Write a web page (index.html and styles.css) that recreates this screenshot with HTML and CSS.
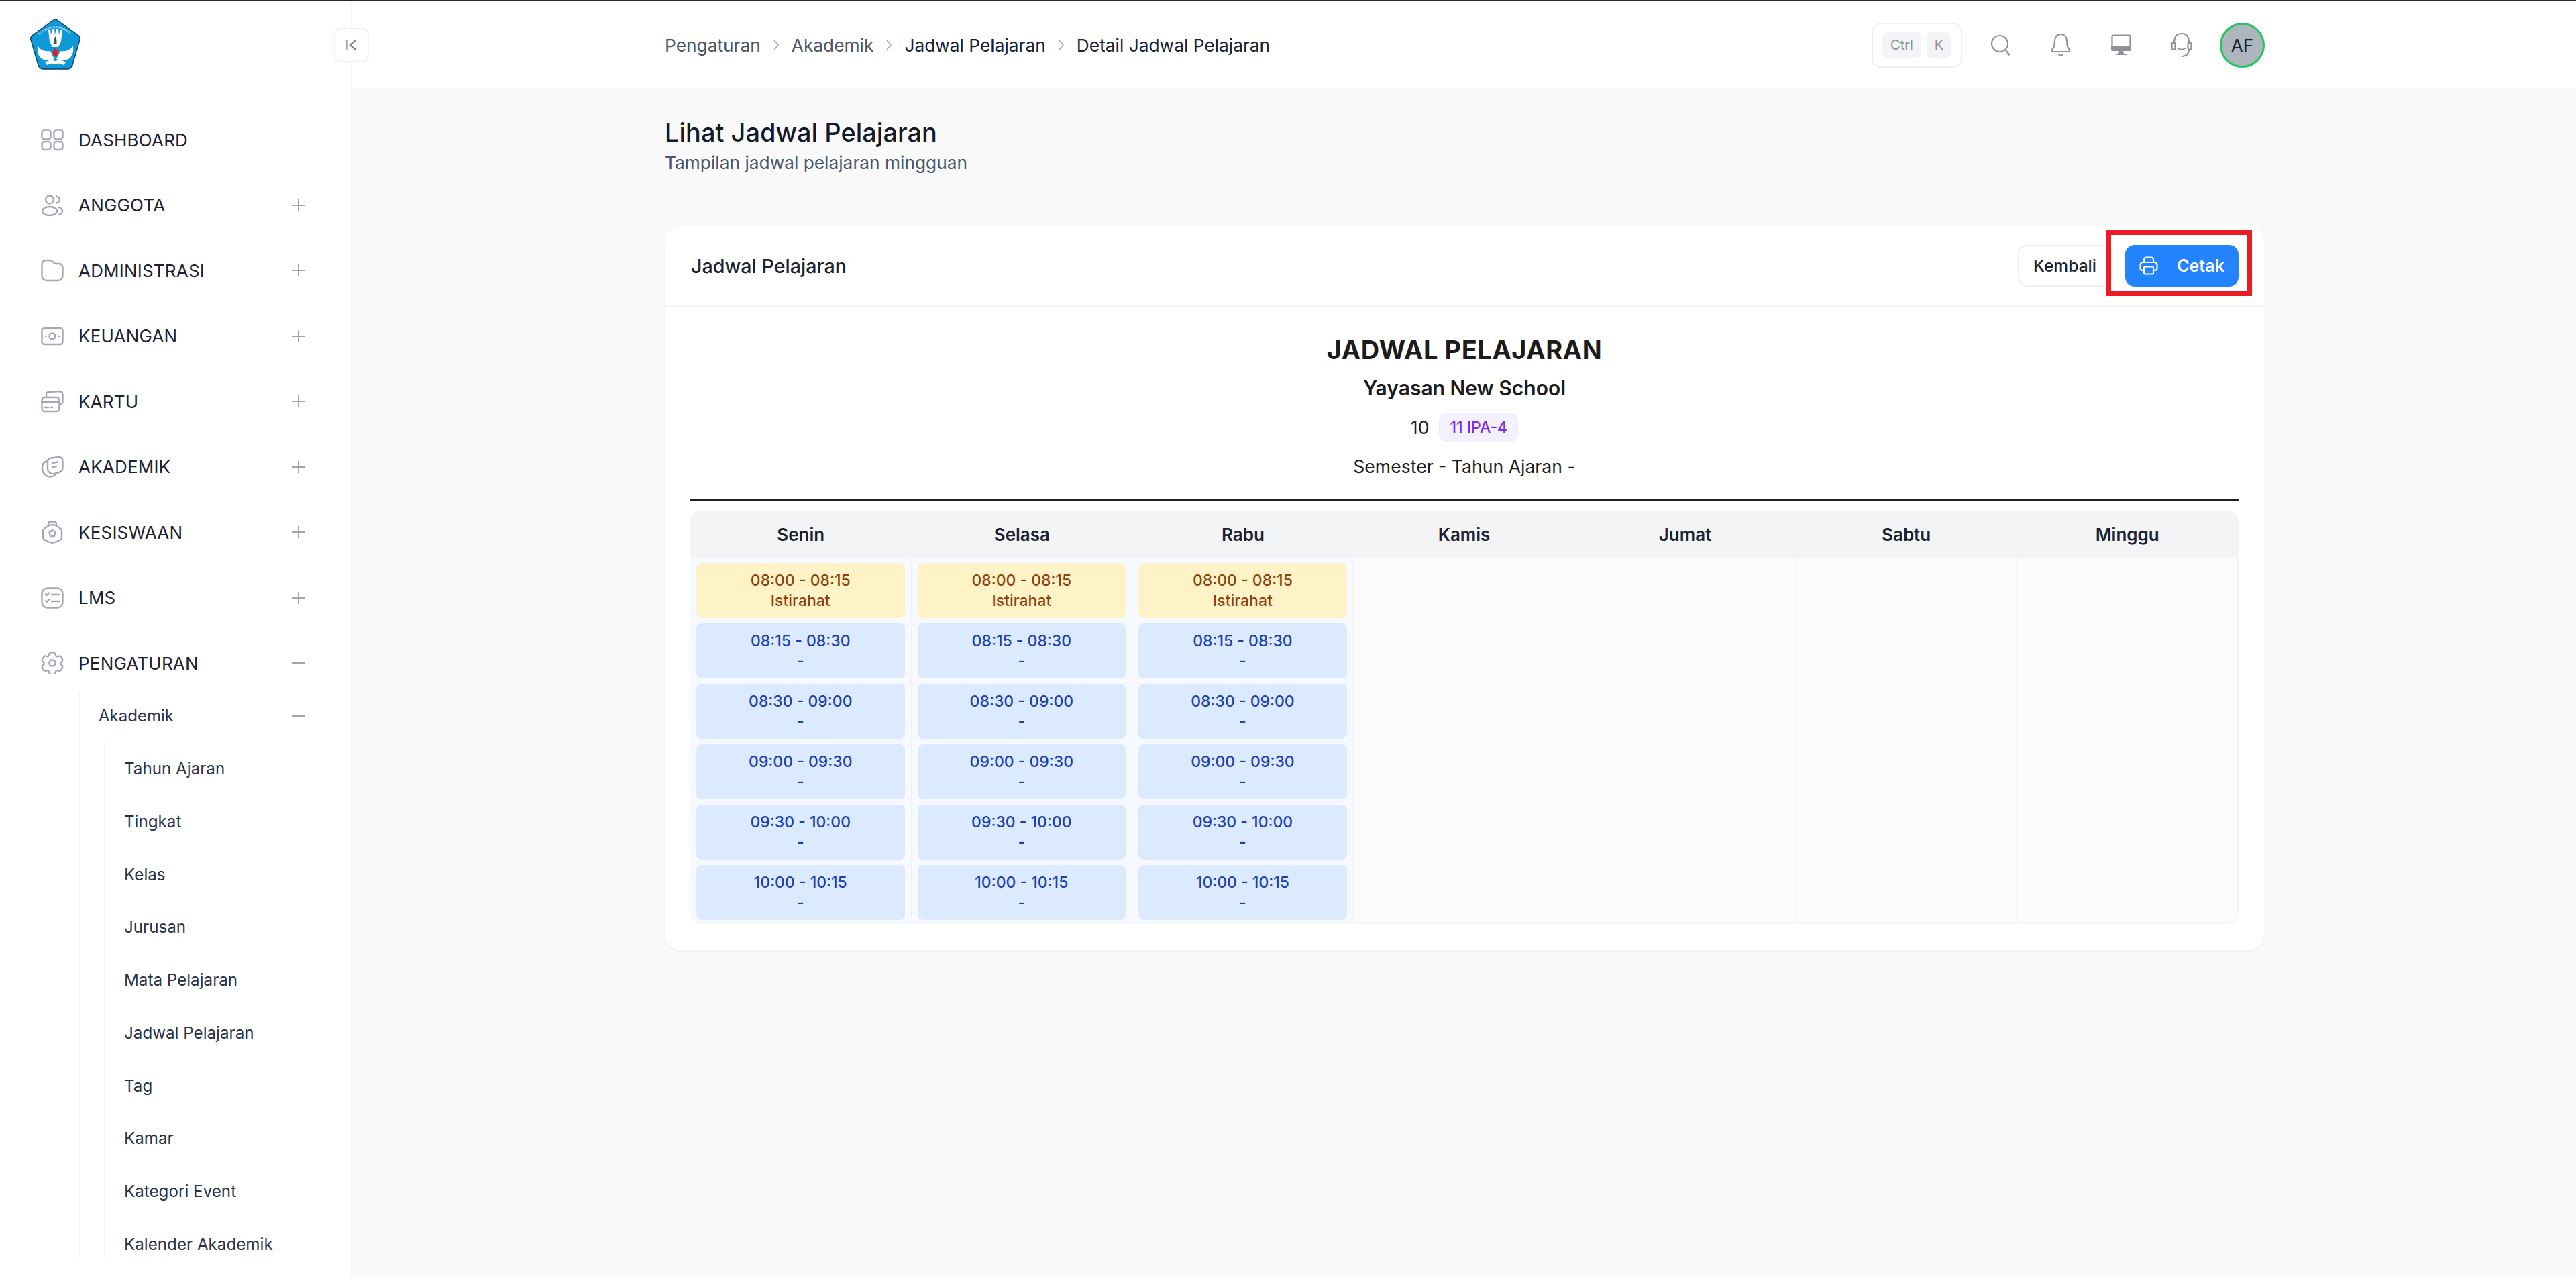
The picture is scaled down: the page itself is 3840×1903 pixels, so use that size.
FILE: index.html
```html
<!DOCTYPE html>
<html lang="en">
<head>
  <meta charset="UTF-8">
  <title>Lihat Jadwal Pelajaran</title>
  <link rel="stylesheet" href="styles.css">
</head>
<body>

<div class="app">
  <aside class="sidebar">
    <div class="logo-row">
      <svg class="logo" viewBox="0 0 75 77">
        <defs><path id="logo-arc" d="M7 31 Q37 -3 68 31"/></defs>
        <path d="M37.500 1 Q39 1 41 2.500 L71 24 Q75 27 74 31 L63 69 Q61 75 56 75 L19 75 Q14 75 12 69 L1 31 Q0 27 4 24 L34 2.500 Q36 1 37.500 1 Z" fill="#0e9ad7" stroke="#123f6b" stroke-width="1.500"/>
        <text class="logo-text"><textPath href="#logo-arc" startOffset="12%">TUT WURI HANDAYANI</textPath></text>
        <path d="M27 17 L30 16 L31 24 L33 15 L36 15 L37 24 L39 15 L42 15 L43 24 L45 16 L48 17 L46 34 L42 42 L33 42 L29 34 Z" fill="#fff"/>
        <path d="M11 40 Q17 50 30 48 L36 60 Q18 66 12 53 Q10 47 11 40 Z M64 40 Q58 50 45 48 L39 60 Q57 66 63 53 Q65 47 64 40 Z" fill="#fff"/>
        <path d="M37.500 43 Q43 49 41 54 Q38 58 34 54 Q32 49 37.500 43 Z" fill="#d8232a"/>
        <path d="M37.500 26 Q40 30 39.500 38 L35.500 38 Q35 30 37.500 26 Z" fill="#33556e"/>
        <path d="M22 65 Q30 59 37.500 63 Q45 59 53 65 L50 69 Q44 65 37.500 68 Q31 65 25 69 Z" fill="#fff"/>
      </svg>
    </div>
    <nav class="nav">
      <a class="nav-item">
        <svg class="nav-icon" viewBox="0 0 34 34"><rect x="1.500" y="2.500" width="13" height="14" rx="3.500"/><rect x="19.500" y="2.500" width="13" height="14" rx="3.500"/><rect x="1.500" y="20" width="13" height="12" rx="3.500"/><rect x="19.500" y="20" width="13" height="12" rx="3.500"/></svg>
        <span>DASHBOARD</span>
      </a>
      <a class="nav-item">
        <svg class="nav-icon" viewBox="0 0 34 34"><circle cx="13" cy="8.500" r="6"/><path d="M23 3.500 Q28 5 28 8.500 Q28 12 23 13.500"/><ellipse cx="13" cy="25.500" rx="11" ry="6.500"/><path d="M27 20 Q32 22 32 25.500 Q32 29 27 31"/></svg>
        <span>ANGGOTA</span>
        <span class="toggle plus"></span>
      </a>
      <a class="nav-item">
        <svg class="nav-icon" viewBox="0 0 34 34"><path d="M1.500 9 Q1.500 2 8 2 L13 2 Q16 2 18 4.500 Q20 7 23 7 L27 7 Q32.500 7.500 32.500 14 L32.500 24 Q32.500 32 25 32 L9 32 Q1.500 32 1.500 24 Z"/></svg>
        <span>ADMINISTRASI</span>
        <span class="toggle plus"></span>
      </a>
      <a class="nav-item">
        <svg class="nav-icon" viewBox="0 0 34 34"><rect x="1.500" y="5" width="31" height="24" rx="4"/><circle cx="17" cy="17" r="4.500"/><path d="M7 17h.5M26.500 17h.5"/></svg>
        <span>KEUANGAN</span>
        <span class="toggle plus"></span>
      </a>
      <a class="nav-item">
        <svg class="nav-icon" viewBox="0 0 34 34"><path d="M8 11 L8 7 Q8 3 12 3 L28 2 Q32.500 2 32.500 7 L32.500 17 Q32.500 21 28 22"/><rect x="1.500" y="11" width="26" height="21" rx="4"/><path d="M1.500 18 H27.500 M6 26 H11 M15 26 H17"/></svg>
        <span>KARTU</span>
        <span class="toggle plus"></span>
      </a>
      <a class="nav-item">
        <svg class="nav-icon" viewBox="0 0 34 34"><path d="M10 8 Q4 9 2.500 14 Q0.500 22 5 27 Q9 32 15 31.500 Q20 31 22 27"/><path d="M10 9 Q10 4 15 3.500 L27 2 Q32 2 32.500 8 L32.500 17 Q33 23 27 25 L20 27 Q12 28 10 21 Z"/><path d="M17 11 L25 9.500 M18 17 L23 16"/></svg>
        <span>AKADEMIK</span>
        <span class="toggle plus"></span>
      </a>
      <a class="nav-item">
        <svg class="nav-icon" viewBox="0 0 34 34"><path d="M11 8 L11 5 Q11 1.500 14 1.500 L20 1.500 Q23 1.500 23 5 L23 8"/><path d="M12 7 Q17 5 22 7 L28 11 Q31 13 31 16 L31 24 Q31 27 28 29 L21 32 Q17 33.500 13 32 L6 29 Q3 27 3 24 L3 16 Q3 13 6 11 Z"/><path d="M17 14 L21.500 17.500 L20 23 L14 23 L12.500 17.500 Z"/></svg>
        <span>KESISWAAN</span>
        <span class="toggle plus"></span>
      </a>
      <a class="nav-item">
        <svg class="nav-icon" viewBox="0 0 34 34"><rect x="1.500" y="2.500" width="31" height="29" rx="8"/><path d="M7 11 L9 13 L12 9.500 M7 21 L9 23 L12 19.500 M16 12 H27 M16 22 H27"/></svg>
        <span>LMS</span>
        <span class="toggle plus"></span>
      </a>
      <a class="nav-item nav-item-gear">
        <svg class="nav-icon" viewBox="1.200 1.500 21.600 21"><circle cx="12" cy="12" r="3"/><path d="M13.800 2.200c-.4-.2-.9-.2-1.800-.2s-1.400 0-1.800.2c-.5.200-.9.600-1.100 1.100-.1.300-.1.600-.2 1-.1.500-.3 1-.8 1.300-.5.300-1 .2-1.500 0-.4-.2-.7-.3-1-.3-.5-.1-1.100.1-1.500.4-.3.300-.6.700-1 1.500s-.7 1.200-.8 1.700c-.1.500 .1 1.100.4 1.500.2.200.4.400.8.600.5.300.8.800.8 1.400s-.3 1.100-.8 1.400c-.4.200-.6.400-.8.600-.3.400-.5 1-.4 1.500.1.500.4.900.8 1.700s.7 1.200 1 1.500c.4.300 1 .5 1.500.4.300 0 .6-.1 1-.3.500-.2 1-.3 1.500 0s.7.800.8 1.300c.1.400.1.700.2 1 .2.500.6.900 1.100 1.100.4.200.9.200 1.800.2s1.400 0 1.800-.2c.5-.2.900-.6 1.100-1.100.1-.3.100-.6.200-1 .1-.5.300-1 .8-1.300s1-.2 1.500 0c.4.200.7.300 1 .3.500.1 1.100-.1 1.500-.4.300-.3.600-.7 1-1.500s.7-1.200.8-1.700c.1-.5-.1-1.100-.4-1.500-.2-.2-.4-.4-.8-.6-.5-.3-.8-.8-.8-1.400s.3-1.100.8-1.400c.4-.2.6-.4.8-.6.3-.4.5-1 .4-1.500-.1-.5-.4-.9-.8-1.700s-.7-1.200-1-1.500c-.4-.3-1-.5-1.500-.4-.3 0-.6.100-1 .3-.5.200-1 .3-1.500 0s-.7-.8-.8-1.300c-.1-.4-.1-.7-.2-1-.2-.5-.6-.9-1.100-1.100z"/></svg>
        <span>PENGATURAN</span>
        <span class="toggle minus"></span>
      </a>
      <div class="sub-list">
        <a class="sub-item">
          <span>Akademik</span>
          <span class="toggle minus"></span>
        </a>
        <div class="leaf-list">
          <a class="leaf-item">Tahun Ajaran</a>
          <a class="leaf-item">Tingkat</a>
          <a class="leaf-item">Kelas</a>
          <a class="leaf-item">Jurusan</a>
          <a class="leaf-item">Mata Pelajaran</a>
          <a class="leaf-item">Jadwal Pelajaran</a>
          <a class="leaf-item">Tag</a>
          <a class="leaf-item">Kamar</a>
          <a class="leaf-item">Kategori Event</a>
          <a class="leaf-item">Kalender Akademik</a>
        </div>
      </div>
    </nav>
  </aside>

  <button class="collapse-btn">
    <svg viewBox="0 0 20 20"><path d="M4 3 V17 M16 3 L8 10 L16 17"/></svg>
  </button>

  <div class="main">
    <header class="topbar">
      <div class="breadcrumb">
        <span class="crumb-muted">Pengaturan</span>
        <svg class="crumb-sep" viewBox="0 0 12 20"><path d="M3 3 L9 10 L3 17"/></svg>
        <span class="crumb-muted">Akademik</span>
        <svg class="crumb-sep" viewBox="0 0 12 20"><path d="M3 3 L9 10 L3 17"/></svg>
        <span>Jadwal Pelajaran</span>
        <svg class="crumb-sep" viewBox="0 0 12 20"><path d="M3 3 L9 10 L3 17"/></svg>
        <span>Detail Jadwal Pelajaran</span>
      </div>
      <div class="top-actions">
        <div class="search-keys">
          <kbd class="key key-ctrl">Ctrl</kbd>
          <kbd class="key key-k">K</kbd>
        </div>
        <svg class="top-icon icon-search" viewBox="0 0 30 32"><circle cx="14" cy="14" r="12"/><path d="M22.500 23 L28 30.500"/></svg>
        <svg class="top-icon icon-bell" viewBox="0 0 30 36"><path d="M15 2 Q23.500 2 24 12 L24.500 18 Q25 22 28 25 Q29.500 28 26 28 L4 28 Q0.500 28 2 25 Q5 22 5.500 18 L6 12 Q6.500 2 15 2 Z"/><path d="M12 32.500 Q15 35 18 32.500"/></svg>
        <svg class="top-icon icon-desktop" viewBox="0 0 30 32"><rect x="1.500" y="1.500" width="27" height="21" rx="1.500"/><path class="fill" d="M0 17 H30 V23 Q30 25 28 25 H2 Q0 25 0 23 Z M12 25 H18 L19 29 H11 Z M7 29 H23 V31 H7 Z"/></svg>
        <svg class="top-icon icon-headset" viewBox="0 0 32 38"><path d="M5 16 Q5 2 16 2 Q27 2 27 16"/><rect x="1.500" y="15" width="5" height="11" rx="2.500"/><rect x="25.500" y="15" width="5" height="11" rx="2.500"/><path d="M27 26 Q27 35 17 36 M11 24 Q16 28 21 24"/></svg>
        <div class="avatar">AF</div>
      </div>
    </header>

    <main class="content">
      <h1 class="page-title">Lihat Jadwal Pelajaran</h1>
      <p class="page-sub">Tampilan jadwal pelajaran mingguan</p>

      <section class="card">
        <div class="card-head">
          <h2 class="card-title">Jadwal Pelajaran</h2>
          <div class="card-actions">
            <button class="btn btn-back">Kembali</button>
            <button class="btn btn-print">
              <svg viewBox="0 0 28 28"><path d="M7 9 V5 Q7 1.500 10.500 1.500 H17.500 Q21 1.500 21 5 V9"/><path d="M7 21 H5 Q1.500 21 1.500 17.500 V13 Q1.500 9 5.500 9 H22.500 Q26.500 9 26.500 13 V17.500 Q26.500 21 23 21 H21"/><rect x="7" y="15.500" width="14" height="11" rx="2"/></svg>
              <span>Cetak</span>
            </button>
            <span class="mark-box"></span>
          </div>
        </div>

        <div class="card-body">
          <div class="sched-title">JADWAL PELAJARAN</div>
          <div class="sched-school">Yayasan New School</div>
          <div class="sched-class"><span>10</span><span class="badge">11 IPA-4</span></div>
          <div class="sched-term">Semester - Tahun Ajaran -</div>
          <hr class="sched-rule">

          <div class="timetable">
            <div class="day-head">Senin</div>
            <div class="day-head">Selasa</div>
            <div class="day-head">Rabu</div>
            <div class="day-head">Kamis</div>
            <div class="day-head">Jumat</div>
            <div class="day-head">Sabtu</div>
            <div class="day-head">Minggu</div>

            <div class="day-col filled">
              <div class="slot slot-break"><div>08:00 - 08:15</div><div>Istirahat</div></div>
              <div class="slot"><div>08:15 - 08:30</div><div>-</div></div>
              <div class="slot"><div>08:30 - 09:00</div><div>-</div></div>
              <div class="slot"><div>09:00 - 09:30</div><div>-</div></div>
              <div class="slot"><div>09:30 - 10:00</div><div>-</div></div>
              <div class="slot"><div>10:00 - 10:15</div><div>-</div></div>
            </div>
            <div class="day-col filled">
              <div class="slot slot-break"><div>08:00 - 08:15</div><div>Istirahat</div></div>
              <div class="slot"><div>08:15 - 08:30</div><div>-</div></div>
              <div class="slot"><div>08:30 - 09:00</div><div>-</div></div>
              <div class="slot"><div>09:00 - 09:30</div><div>-</div></div>
              <div class="slot"><div>09:30 - 10:00</div><div>-</div></div>
              <div class="slot"><div>10:00 - 10:15</div><div>-</div></div>
            </div>
            <div class="day-col filled">
              <div class="slot slot-break"><div>08:00 - 08:15</div><div>Istirahat</div></div>
              <div class="slot"><div>08:15 - 08:30</div><div>-</div></div>
              <div class="slot"><div>08:30 - 09:00</div><div>-</div></div>
              <div class="slot"><div>09:00 - 09:30</div><div>-</div></div>
              <div class="slot"><div>09:30 - 10:00</div><div>-</div></div>
              <div class="slot"><div>10:00 - 10:15</div><div>-</div></div>
            </div>
            <div class="day-col"></div>
            <div class="day-col"></div>
            <div class="day-col"></div>
            <div class="day-col"></div>
          </div>
        </div>
      </section>
    </main>
  </div>
</div>

</body>
</html>
```
FILE: styles.css
```css
* {
  box-sizing: border-box;
}

html,
body {
  margin: 0;
  height: 1903px;
  overflow: hidden;
}

body {
  font-family: Inter, "Noto Sans", sans-serif;
  background-color: #f9f9fa;
  color: #1c2230;
  border-top: 2px solid #2a2a2a;
}

.app {
  position: relative;
  display: flex;
  height: 1901px;
}

/* sidebar */
.sidebar {
  display: flex;
  flex-direction: column;
  flex: 0 0 524px;
  padding-bottom: 30px;
  background-color: #fff;
  border-right: 1px solid #f5f5f6;
}

.logo-row {
  flex: 0 0 auto;
  height: 167px;
  padding: 26px 0 0 45px;
}

.logo {
  display: block;
  width: 75px;
  height: 77px;
}

.logo-text {
  font-family: "Liberation Sans", sans-serif;
  font-size: 4.600px;
  fill: #e6f5fc;
}

.nav {
  flex: 1;
  min-height: 0;
  overflow: hidden;
  padding-left: 61px;
}

.nav-item {
  display: flex;
  align-items: center;
  height: 78.700px;
  margin-bottom: 18.800px;
  font-size: 26px;
  letter-spacing: 0.200px;
}

.nav-item:last-of-type {
  margin-bottom: 0;
}

.nav-icon {
  flex: 0 0 34px;
  width: 34px;
  height: 34px;
  margin-right: 22px;
  fill: none;
  stroke: #a4a7b8;
  stroke-width: 2.400;
  stroke-linecap: round;
  stroke-linejoin: round;
}

.nav-item-gear .nav-icon {
  stroke-width: 1.500;
}

.toggle {
  position: relative;
  width: 18px;
  height: 18px;
  margin-left: auto;
  margin-right: 69px;
}

.toggle::before,
.toggle::after {
  content: "";
  position: absolute;
  background-color: #a3a3aa;
}

.toggle::before {
  left: 0;
  top: 8px;
  width: 18px;
  height: 2px;
}

.plus::after {
  left: 8px;
  top: 0;
  width: 2px;
  height: 18px;
}

.sub-list {
  margin-left: 57px;
  border-left: 2px solid #f3f4f6;
}

.sub-item {
  display: flex;
  align-items: center;
  height: 78.700px;
  padding-left: 27px;
  font-size: 24px;
  color: #2b3245;
}

.leaf-list {
  margin-left: 35px;
  border-left: 2px solid #f3f4f6;
}

.leaf-item {
  display: flex;
  align-items: center;
  height: 78.750px;
  padding-left: 28px;
  font-size: 24.200px;
  color: #2b3245;
}

.collapse-btn {
  position: absolute;
  left: 498px;
  top: 39px;
  display: flex;
  align-items: center;
  justify-content: center;
  width: 52px;
  height: 52px;
  padding: 0;
  background-color: #fff;
  border: 2px solid #f2f2f4;
  border-radius: 11px;
}

.collapse-btn svg {
  width: 22px;
  height: 22px;
  fill: none;
  stroke: #7d7f86;
  stroke-width: 2;
}

/* top bar */
.main {
  flex: 1;
  min-width: 0;
}

.topbar {
  display: flex;
  align-items: center;
  justify-content: space-between;
  height: 130px;
  padding: 0 464px 0 467px;
  background-color: #fff;
}

.breadcrumb {
  display: flex;
  align-items: center;
  gap: 17px;
  font-size: 26.300px;
  color: #1c2230;
}

.crumb-muted {
  color: #4b5565;
}

.crumb-sep {
  width: 12px;
  height: 20px;
  fill: none;
  stroke: #a3a6ad;
  stroke-width: 1.500;
}

.top-actions {
  display: flex;
  align-items: center;
}

.search-keys {
  display: flex;
  align-items: center;
  gap: 8px;
  width: 135px;
  height: 67px;
  padding: 0 14px;
  background-color: #fff;
  border: 2px solid #f0f0f2;
  border-radius: 14px;
}

.key {
  display: flex;
  align-items: center;
  justify-content: center;
  height: 38px;
  font-family: Inter, sans-serif;
  font-size: 20px;
  color: #8c9099;
  background-color: #f3f4f6;
  border-radius: 8px;
}

.key-ctrl {
  width: 58px;
}

.key-k {
  width: 37px;
}

.top-icon {
  fill: none;
  stroke: #8f9196;
  stroke-width: 2.200;
  stroke-linecap: round;
  stroke-linejoin: round;
}

.top-icon .fill {
  fill: #8f9196;
  stroke: none;
}

.icon-search {
  width: 30px;
  height: 32px;
  margin-left: 42px;
}

.icon-bell {
  width: 30px;
  height: 36px;
  margin-left: 60px;
}

.icon-desktop {
  width: 30px;
  height: 32px;
  margin-left: 60px;
}

.icon-headset {
  width: 32px;
  height: 38px;
  margin-left: 59px;
}

.avatar {
  display: flex;
  align-items: center;
  justify-content: center;
  width: 67px;
  height: 67px;
  margin-left: 41px;
  font-size: 26px;
  color: #1c2230;
  background-color: #adb5bd;
  border: 3px solid #22c55e;
  border-radius: 50%;
}

/* page content */
.content {
  padding: 42px 465px 0 467px;
}

.page-title {
  margin: 0;
  font-size: 38px;
  font-weight: 500;
  line-height: 46px;
  color: #141a2a;
}

.page-sub {
  margin: 6px 0 0;
  font-size: 26.300px;
  line-height: 34px;
  color: #4b5565;
}

.card {
  margin-top: 77px;
  background-color: #fff;
  border-radius: 24px;
  box-shadow: 0 2px 3px rgba(20, 20, 40, 0.04);
}

.card-head {
  display: flex;
  align-items: center;
  justify-content: space-between;
  height: 120px;
  padding: 0 38px 0 39px;
  border-bottom: 2px solid #f3f4f6;
}

.card-title {
  margin: 0;
  font-size: 28.700px;
  font-weight: 500;
}

.card-actions {
  position: relative;
  display: flex;
  gap: 20px;
}

.btn {
  display: flex;
  align-items: center;
  justify-content: center;
  height: 62px;
  padding: 0;
  font-family: inherit;
  font-size: 24.600px;
  font-weight: 500;
  border-radius: 14px;
}

.btn-back {
  width: 140px;
  color: #1c2230;
  background-color: #fff;
  border: 2px solid #eeeef0;
}

.btn-print {
  gap: 28px;
  width: 169px;
  font-size: 25px;
  font-weight: 600;
  color: #fff;
  background-color: #2483ff;
  border: none;
}

.btn-print svg {
  width: 28px;
  height: 28px;
  fill: none;
  stroke: #fff;
  stroke-width: 2.200;
  stroke-linejoin: round;
}

.mark-box {
  position: absolute;
  right: -20px;
  top: -22px;
  width: 217px;
  height: 98px;
  border: 7px solid #ed1c24;
}

.card-body {
  padding: 41px 38px 39px;
  text-align: center;
}

.sched-title {
  font-size: 38px;
  font-weight: 700;
  line-height: 46px;
  letter-spacing: 0.550px;
  color: #1c1c1c;
}

.sched-school {
  margin-top: 16px;
  font-size: 30px;
  font-weight: 600;
  line-height: 36px;
  color: #1c1c1c;
}

.sched-class {
  display: flex;
  align-items: center;
  justify-content: center;
  gap: 15px;
  height: 44px;
  margin-top: 19px;
  font-size: 26.600px;
  color: #1c1c1c;
}

.badge {
  display: flex;
  align-items: center;
  height: 44px;
  padding: 0 15px;
  font-size: 23px;
  font-weight: 500;
  color: #7a2de6;
  background-color: #f4f1ff;
  border: 1px solid #f0ecff;
  border-radius: 12px;
}

.sched-term {
  margin-top: 19px;
  font-size: 26.600px;
  line-height: 34px;
  color: #1c1c1c;
}

.sched-rule {
  height: 3px;
  margin: 31px 0 15px;
  background-color: #1f1f1f;
  border: none;
}

/* timetable */
.timetable {
  display: grid;
  grid-template-columns: repeat(7, minmax(0, 1fr));
  overflow: hidden;
  background-color: #fbfbfc;
  border-radius: 16px;
  border-bottom: 2px solid #f3f4f6;
  border-right: 1px solid #f3f4f6;
}

.day-head {
  display: flex;
  align-items: center;
  justify-content: center;
  height: 71px;
  font-size: 26px;
  font-weight: 600;
  color: #1c2230;
  background-color: #f3f4f6;
}

.day-col {
  min-height: 543px;
  border-right: 1px solid #f3f4f6;
}

.day-col.filled {
  display: flex;
  flex-direction: column;
  gap: 8px;
  padding: 7px 9px 0;
  background-color: #f6f9ff;
  border-right: 1px solid #eef1f6;
}

.slot {
  height: 82px;
  padding-top: 11px;
  font-size: 23px;
  font-weight: 500;
  line-height: 30px;
  color: #1e40af;
  background-color: #dbeafe;
  border-radius: 8px;
}

.slot-break {
  color: #92400e;
  background-color: #fef3c7;
}
```
